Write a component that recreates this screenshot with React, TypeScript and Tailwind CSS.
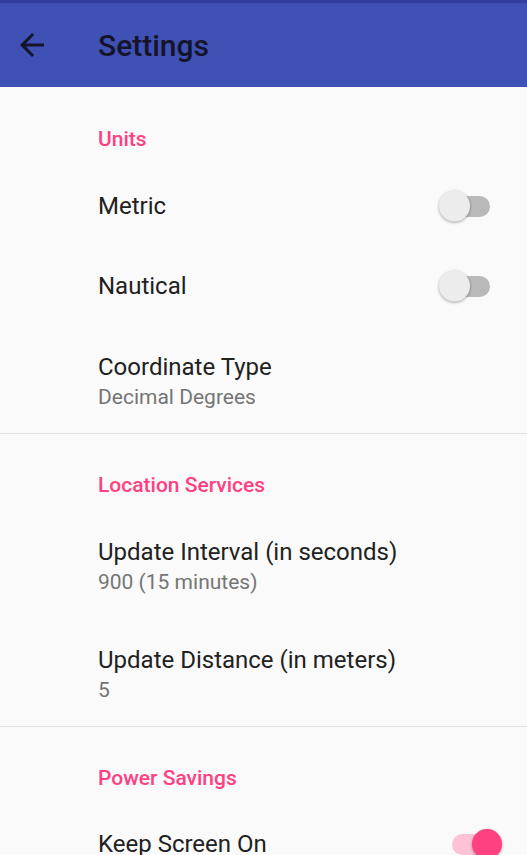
import React from 'react'

type Item = { title: string; summary?: string; toggle?: 'on' | 'off' }
type Section = { name: string; items: Item[] }

const sections: Section[] = [
  {
    name: 'Units',
    items: [
      { title: 'Metric', toggle: 'off' },
      { title: 'Nautical', toggle: 'off' },
      { title: 'Coordinate Type', summary: 'Decimal Degrees' },
    ],
  },
  {
    name: 'Location Services',
    items: [
      { title: 'Update Interval (in seconds)', summary: '900 (15 minutes)' },
      { title: 'Update Distance (in meters)', summary: '5' },
    ],
  },
  {
    name: 'Power Savings',
    items: [{ title: 'Keep Screen On', toggle: 'on' }],
  },
]

function Switch({ on }: { on: boolean }) {
  if (on) {
    return (
      <div className="relative mr-[29px] h-[21px] w-[46px] rounded-full bg-[#fdc2d6]">
        <div className="absolute right-[-4px] top-1/2 h-[30px] w-[30px] -translate-y-1/2 rounded-full bg-[#ff4081] shadow-[0_1px_3px_rgba(0,0,0,0.35)]" />
      </div>
    )
  }
  return (
    <div className="relative mr-[37px] h-[21px] w-[46px] rounded-full bg-[#b9b9b9]">
      <div className="absolute left-[-5px] top-1/2 h-[31px] w-[31px] -translate-y-1/2 rounded-full bg-[#ececec] shadow-[0_1px_3px_rgba(0,0,0,0.35)]" />
    </div>
  )
}

function Row({ item }: { item: Item }) {
  if (item.summary) {
    return (
      <div className="flex h-[108px] flex-col pl-[98px] pt-[28px]">
        <div className="h-[28px] text-[24px] leading-[28px] text-[#212121]">{item.title}</div>
        <div className="mt-[4px] h-[24px] text-[21px] leading-[24px] text-[#757575]">{item.summary}</div>
      </div>
    )
  }
  return (
    <div className="flex h-[80px] items-center justify-between pl-[98px] pt-[2px]">
      <div className="text-[24px] leading-[28px] text-[#212121]">{item.title}</div>
      {item.toggle && <Switch on={item.toggle === 'on'} />}
    </div>
  )
}

export default function App() {
  return (
    <div
      className="h-[855px] w-[527px] overflow-hidden bg-[#fafafa]"
      style={{ fontFamily: 'Roboto, "Liberation Sans", sans-serif' }}
    >
      <div className="h-[3px] bg-[#303f9f]" />
      <header className="flex h-[84px] items-center bg-[#3f51b5]">
        <svg viewBox="0 0 24 24" className="ml-[14px] h-[36px] w-[36px]" fill="#14142a">
          <path d="M20 11H7.83l5.59-5.59L12 4l-8 8 8 8 1.41-1.41L7.83 13H20v-2z" />
        </svg>
        <h1 className="ml-[48px] pt-[2px] text-[30px] font-medium leading-none text-[#14142a]">Settings</h1>
      </header>

      <main>
        {sections.map((s, i) => (
          <section key={s.name} className={i > 0 ? 'border-t border-[#dedede]' : ''}>
            <div className={i > 0 ? 'h-[76px] pl-[98px] pt-[39px]' : 'h-[78px] pl-[98px] pt-[40px]'}>
              <div className="text-[21px] font-medium leading-[24px] text-[#ff4081]">{s.name}</div>
            </div>
            {s.items.map((it) => (
              <Row key={it.title} item={it} />
            ))}
          </section>
        ))}
      </main>
    </div>
  )
}
